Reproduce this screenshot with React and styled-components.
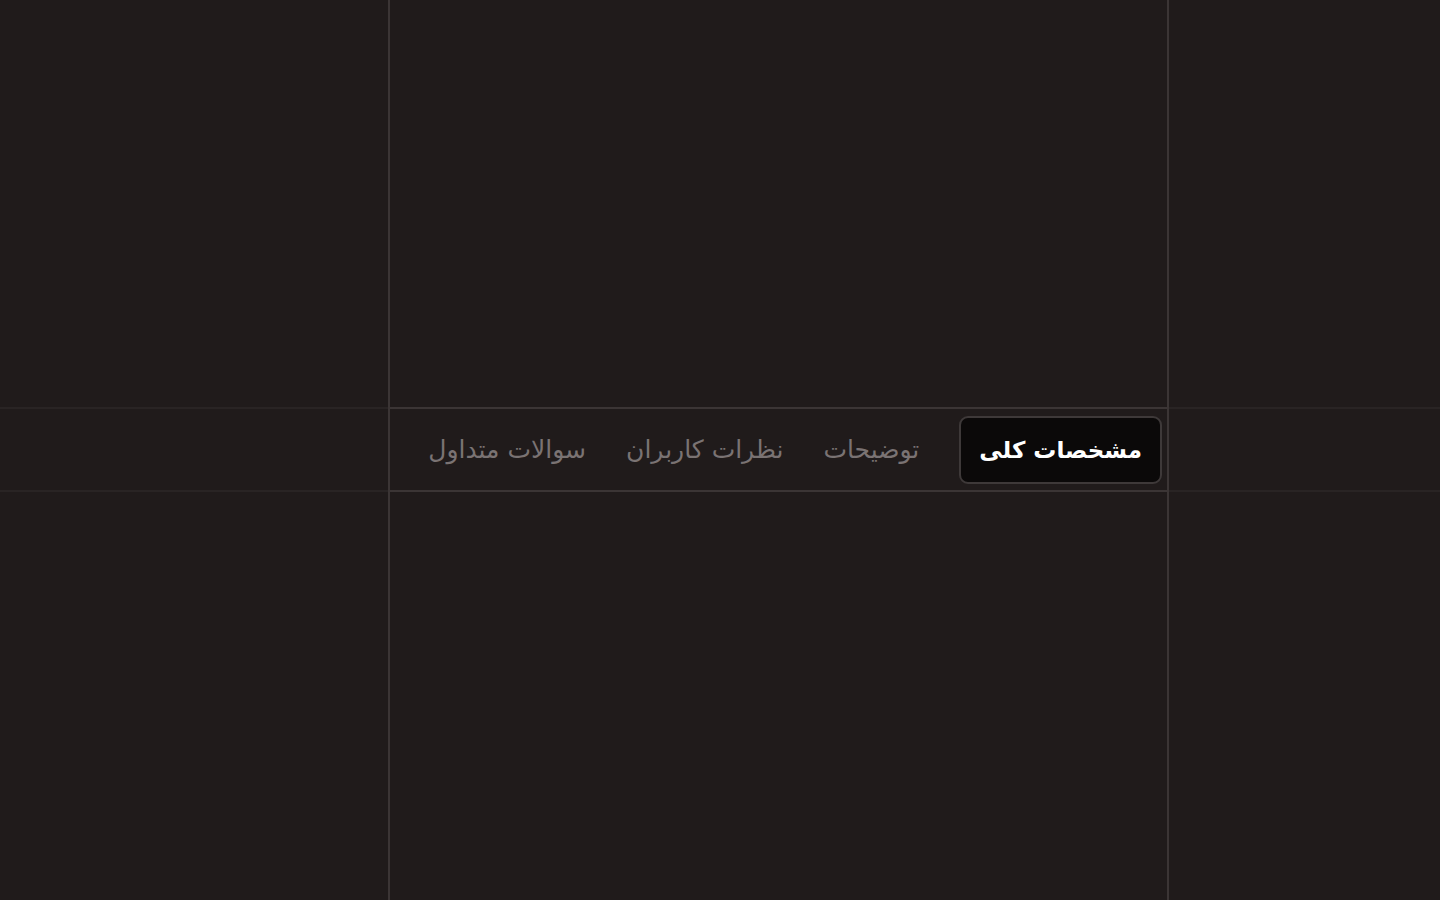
import React, { useState } from 'react';
import styled, { createGlobalStyle } from 'styled-components';

const GlobalStyle = createGlobalStyle`
  html, body {
    margin: 0;
    padding: 0;
    background: #201b1b;
  }
  * {
    box-sizing: border-box;
  }
`;

const Page = styled.div`
  width: 100%;
  height: 100vh;
  display: flex;
  flex-direction: column;
  overflow: hidden;
  background: #201b1b;
  font-family: 'DejaVu Sans', 'Noto Sans', sans-serif;
`;

const Strip = styled.div`
  height: ${(p) => p.$height || 'auto'};
  flex: ${(p) => (p.$grow ? 1 : 'none')};
  display: flex;
`;

const Band = styled.div`
  height: 85px;
  display: flex;
  border-top: 2px solid #292424;
  border-bottom: 2px solid #292424;
`;

const Rail = styled.div`
  width: 781px;
  margin-left: 388px;
  border-left: 2px solid #3b3535;
  border-right: 2px solid #3b3535;
`;

const TabRail = styled(Rail)`
  margin-top: -2px;
  margin-bottom: -2px;
  border-top: 2px solid #3b3535;
  border-bottom: 2px solid #3b3535;
  display: flex;
  align-items: center;
  direction: rtl;
  padding: 0 5px;
`;

const Tab = styled.button`
  height: 68px;
  padding: 0 18px;
  margin-left: ${(p) => (p.$active ? '20px' : '0')};
  border: 2px solid ${(p) => (p.$active ? '#3e3939' : 'transparent')};
  border-radius: 9px;
  background: ${(p) => (p.$active ? '#0b0909' : 'transparent')};
  color: ${(p) => (p.$active ? '#ffffff' : '#7a7373')};
  font-family: inherit;
  font-size: ${(p) => (p.$active ? '23px' : '25px')};
  font-weight: ${(p) => (p.$active ? 700 : 500)};
  white-space: nowrap;
  cursor: pointer;
  outline: none;
`;

const tabs = ['مشخصات کلی', 'توضیحات', 'نظرات کاربران', 'سوالات متداول'];

export default function App() {
  const [active, setActive] = useState(0);

  return (
    <>
      <GlobalStyle />
      <Page>
        <Strip $height='407px'>
          <Rail />
        </Strip>
        <Band>
          <TabRail>
            {tabs.map((t, i) => (
              <Tab key={t} $active={active === i} onClick={() => setActive(i)}>
                {t}
              </Tab>
            ))}
          </TabRail>
        </Band>
        <Strip $grow>
          <Rail />
        </Strip>
      </Page>
    </>
  );
}
